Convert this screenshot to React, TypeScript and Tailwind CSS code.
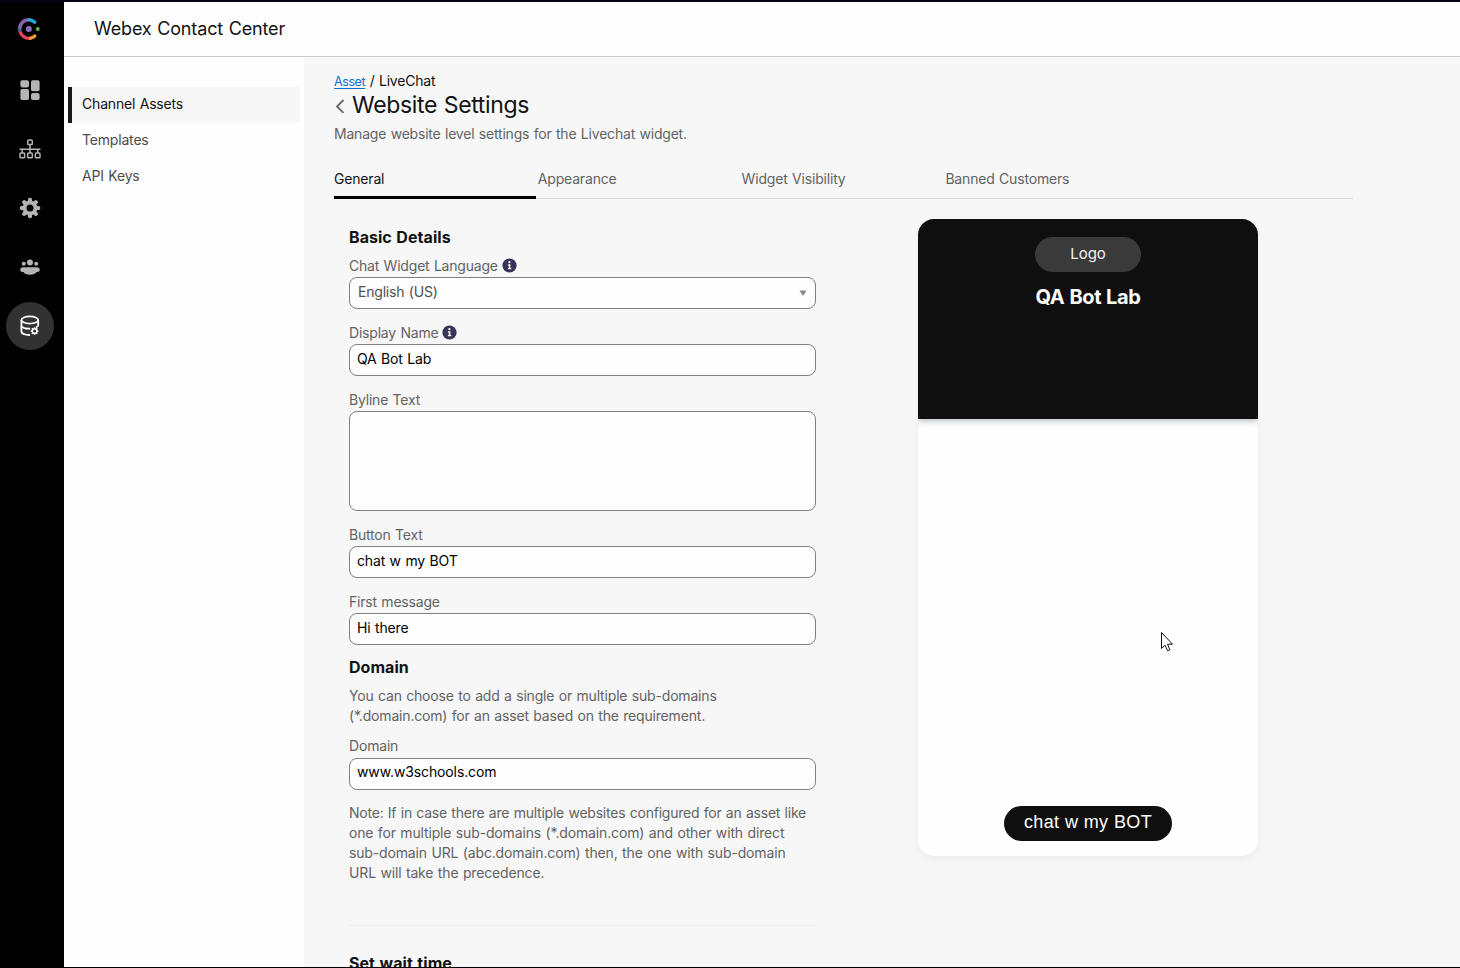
import React from "react";

const INK = "text-[#121212]";
const MUTED = "text-[#636363]";
const HEADING = "text-[16px] leading-[22px] font-bold tracking-[0.05px] text-[#121212]";

function Logo() {
  return (
    <svg width="24" height="24" viewBox="0 0 24 24" fill="none" strokeWidth="3.4">
      <path d="M2.6 12.6A9.4 9.4 0 0 1 12.5 2.7" stroke="#8a63b0" />
      <path d="M12.3 2.7A9.4 9.4 0 0 1 17.8 5.2" stroke="#28a5dc" strokeLinecap="round" />
      <path d="M2.6 11.4A9.4 9.4 0 0 0 3 14.6" stroke="#2a6f9e" />
      <path d="M3 14.4A9.4 9.4 0 0 0 13.6 21.2" stroke="#ea3f63" />
      <path d="M13.6 21.2A9.4 9.4 0 0 0 17.8 19" stroke="#f5a02c" strokeLinecap="round" />
      <circle cx="11.8" cy="12" r="3" fill="#8a6bbf" />
      <circle cx="20.8" cy="12" r="1.9" fill="#5fb846" />
    </svg>
  );
}

function DashboardIcon() {
  return (
    <svg width="20" height="20" viewBox="0 0 20 20" fill="#b4b4b4">
      <rect x="0.4" y="0.2" width="8.6" height="7.2" rx="1.8" />
      <rect x="11" y="0.2" width="8.6" height="11" rx="1.8" />
      <rect x="0.4" y="9" width="8.6" height="11" rx="1.8" />
      <rect x="11" y="13" width="8.6" height="7" rx="1.8" />
    </svg>
  );
}

function TreeIcon() {
  return (
    <svg width="22" height="20" viewBox="0 0 22 20" fill="none" stroke="#b4b4b4" strokeWidth="1.5">
      <rect x="8.7" y="1" width="4.6" height="4.6" rx="0.9" />
      <path d="M11 5.6V14M3.2 14V10.2M18.8 14V10.2M0.5 10.2H21.5" />
      <rect x="1" y="14" width="4.6" height="4.8" rx="0.9" />
      <rect x="8.7" y="14" width="4.6" height="4.8" rx="0.9" />
      <rect x="16.4" y="14" width="4.6" height="4.8" rx="0.9" />
    </svg>
  );
}

function GearIcon() {
  return (
    <svg width="22" height="22" viewBox="-11 -11 22 22">
      <g fill="#b4b4b4">
        {[0, 45, 90, 135].map((a) => (
          <rect key={a} x="-2" y="-10.2" width="4" height="20.4" rx="1.6" transform={`rotate(${a})`} />
        ))}
        <circle r="7.4" />
      </g>
      <circle r="3.5" fill="#000" />
    </svg>
  );
}

function PeopleIcon() {
  return (
    <svg width="20" height="16" viewBox="0 0 20 16" fill="#b4b4b4">
      <circle cx="10" cy="3.4" r="3" />
      <circle cx="3.8" cy="4.8" r="2" />
      <circle cx="16.2" cy="4.8" r="2" />
      <path d="M0.2 11.2C0.2 9 1.4 8.2 3 8.2H17C18.6 8.2 19.8 9 19.8 11.2C19.8 12.3 18.5 12.9 16.6 13C15.5 15 13 15.7 10 15.7S4.5 15 3.4 13C1.5 12.9 0.2 12.3 0.2 11.2Z" />
    </svg>
  );
}

function DatabaseIcon() {
  return (
    <svg width="20" height="22" viewBox="0 0 20 22" fill="none" stroke="#fff" strokeWidth="1.8">
      <ellipse cx="9.8" cy="5" rx="8.4" ry="3.6" />
      <path d="M1.4 5V16.5C1.4 18.5 5 20 10 20" />
      <path d="M18.2 5V10.8" />
      <path d="M1.4 11C2.6 13 6 13.9 10.2 13.6M18.2 10.6C17.8 11.3 17 12 16 12.4" />
      <circle cx="14.6" cy="16" r="2.3" strokeWidth="1.5" />
      <path
        strokeWidth="1.5"
        d="M14.6 12.2V13.7M14.6 18.3V19.8M10.8 16H12.3M16.9 16H18.4M11.9 13.3L13 14.4M16.2 17.6L17.3 18.7M11.9 18.7L13 17.6M16.2 14.4L17.3 13.3"
      />
    </svg>
  );
}

function InfoIcon() {
  return (
    <svg width="15" height="15" viewBox="0 0 15 15">
      <circle cx="7.5" cy="7.5" r="7.1" fill="#36345a" />
      <circle cx="7.4" cy="4.2" r="1.1" fill="#fff" />
      <path d="M5.9 6.3H8.4V10H9.3V11.2H5.9V10H6.8V7.5H5.9Z" fill="#fff" />
    </svg>
  );
}

function Label({ children, info }: { children: string; info?: boolean }) {
  return (
    <div className={`flex h-[22px] items-center gap-1 pb-px text-[14px] tracking-[-0.2px] ${MUTED}`}>
      <span>{children}</span>
      {info && <InfoIcon />}
    </div>
  );
}

function Field({ label, value, info }: { label: string; value: string; info?: boolean }) {
  return (
    <div>
      <Label info={info}>{label}</Label>
      <div className="flex h-8 items-center rounded-lg border border-[#808080] bg-[#fefefe] px-[7px] pb-[3px] text-[14px] tracking-[-0.15px] text-black">
        {value}
      </div>
    </div>
  );
}

function Rail() {
  return (
    <aside className="flex w-16 shrink-0 flex-col items-center bg-black pr-1">
      <div className="mt-[15px] mr-[2px]"><Logo /></div>
      <div className="mt-[25px] flex flex-col gap-[11px]">
        {[DashboardIcon, TreeIcon, GearIcon, PeopleIcon, DatabaseIcon].map((Icon, i) => (
          <div
            key={i}
            className={`flex size-12 items-center justify-center rounded-full ${i === 4 ? "bg-[#323232]" : ""}`}
          >
            <Icon />
          </div>
        ))}
      </div>
    </aside>
  );
}

function Preview() {
  return (
    <section className="mt-5 flex h-[637px] w-[340px] flex-col items-center overflow-hidden rounded-2xl bg-[#fefefe] shadow-[0_3px_8px_rgba(0,0,0,0.05)]">
      <div className="flex h-[200px] w-full shrink-0 flex-col items-center bg-[#0f0f0f] pt-[18px] shadow-[0_2px_6px_rgba(40,70,80,0.35)]">
        <div className="flex h-[35px] w-[106px] items-center justify-center rounded-full bg-[#3a3a3a] text-[15px] text-[#f2f2f2]">
          Logo
        </div>
        <div className="mt-[13px] text-[20px] leading-6 font-bold tracking-[-0.4px] text-white">QA Bot Lab</div>
      </div>
      <div className="mt-auto mb-[15px] flex h-[35px] w-[168px] items-center justify-center rounded-full bg-[#0f0f0f] pb-[3px] font-['Liberation_Sans',sans-serif] text-[18px] tracking-[0.4px] [word-spacing:0] text-white">
        chat w my BOT
      </div>
    </section>
  );
}

const tabs = ["General", "Appearance", "Widget Visibility", "Banned Customers"];

export default function App() {
  return (
    <div className="relative flex h-[968px] w-[1460px] flex-col overflow-hidden border-t-2 border-b border-t-[#050518] border-b-black bg-[#f7f7f8] font-['Inter',sans-serif] [word-spacing:0.7px]">
      <div className="flex min-h-0 flex-1">
        <Rail />
        <div className="flex min-w-0 flex-1 flex-col">
          <header className={`flex h-[55px] shrink-0 items-center border-b border-[#cbcbcd] bg-[#fefefe] pb-[2px] pl-[30px] text-[18px] tracking-[-0.14px] ${INK}`}>
            Webex Contact Center
          </header>
          <div className="flex min-h-0 flex-1">
            <nav className="flex w-60 shrink-0 flex-col bg-[#fefefe] pt-[30px] pr-1 pl-1 text-[14px] tracking-[-0.18px] text-[#4d4d4d]">
              <div className={`flex h-9 items-center border-l-4 border-[#1a1a1a] bg-[#f7f7f8] pb-[3px] pl-[10px] ${INK}`}>
                Channel Assets
              </div>
              <div className="flex h-9 items-center pb-[3px] pl-[14px]">Templates</div>
              <div className="flex h-9 items-center pb-[3px] pl-[14px]">API Keys</div>
            </nav>
            <main className="min-w-0 flex-1 overflow-hidden pt-[14px] pl-[30px]">
              <div className={`flex h-5 items-baseline text-[14px] leading-[19px] tracking-[-0.2px] whitespace-pre ${INK}`}>
                <a className="text-[12.5px] tracking-[-0.4px] text-[#1170cf] underline underline-offset-2">Asset</a>
                <span> / LiveChat</span>
              </div>
              <h1 className={`flex h-7 items-center gap-1.5 text-[23px] tracking-[-0.35px] ${INK}`}>
                <svg width="12" height="16" viewBox="0 0 12 16" fill="none" stroke="#666" strokeWidth="1.8">
                  <path d="M9.5 3L3 9.5L9.5 16" />
                </svg>
                Website Settings
              </h1>
              <p className={`mt-[5px] h-5 text-[14px] leading-5 tracking-[-0.2px] ${MUTED}`}>
                Manage website level settings for the Livechat widget.
              </p>
              <div className="mt-[15px] grid h-10 w-[1019px] grid-cols-5 border-b border-[#d9d9da]">
                {tabs.map((tab, i) => (
                  <div
                    key={tab}
                    className={`h-10 pt-[10px] text-[14px] leading-5 tracking-[-0.18px] ${
                      i === 0 ? "mr-[2px] border-b-[3px] border-black text-[#121212]" : "text-[#636363]"
                    }`}
                  >
                    {tab}
                  </div>
                ))}
              </div>
              <div className="flex items-start">
                <form className="ml-[15px] flex w-[467px] shrink-0 flex-col pt-[27px]">
                  <h2 className={`mb-[7px] h-[22px] ${HEADING}`}>Basic Details</h2>
                  <div className="flex flex-col gap-[13px]">
                    <div>
                      <Label info>Chat Widget Language</Label>
                      <div className="flex h-8 items-center justify-between rounded-lg border border-[#808080] bg-[#fefefe] px-2 pb-[3px] text-[14px] tracking-[-0.2px] text-[#505050]">
                        English (US)
                        <svg className="mt-0.5" width="8" height="6" viewBox="0 0 8 6" fill="#888">
                          <path d="M0.5 0.5H7.5L4 6Z" />
                        </svg>
                      </div>
                    </div>
                    <Field label="Display Name" value="QA Bot Lab" info />
                    <div>
                      <Label>Byline Text</Label>
                      <div className="h-[100px] rounded-lg border border-[#808080] bg-[#fefefe]" />
                    </div>
                    <Field label="Button Text" value="chat w my BOT" />
                    <Field label="First message" value="Hi there" />
                  </div>
                  <h2 className={`mt-[11px] h-[22px] ${HEADING}`}>Domain</h2>
                  <p className={`mt-2 mb-[10px] text-[14px] leading-5 tracking-[-0.18px] whitespace-nowrap ${MUTED}`}>
                    You can choose to add a single or multiple sub-domains
                    <br />
                    (*.domain.com) for an asset based on the requirement.
                  </p>
                  <div className={`h-[22px] text-[14px] leading-5 tracking-[-0.18px] ${MUTED}`}>Domain</div>
                  <div className="h-8 rounded-lg border border-[#808080] bg-[#fefefe] px-[7px] pt-[3px] text-[14px] leading-5 tracking-[-0.12px] text-black">
                    www.w3schools.com
                  </div>
                  <p className={`mt-[13px] text-[14px] leading-5 tracking-[-0.15px] whitespace-nowrap ${MUTED}`}>
                    <span className="tracking-[-0.23px]">
                      Note: If in case there are multiple websites configured for an asset like
                    </span>
                    <br />
                    one for multiple sub-domains (*.domain.com) and other with direct
                    <br />
                    sub-domain URL (abc.domain.com) then, the one with sub-domain
                    <br />
                    URL will take the precedence.
                  </p>
                  <hr className="mt-[42px] border-[#efeff0]" />
                  <h2 className={`mt-[26px] ${HEADING}`}>Set wait time</h2>
                </form>
                <div className="ml-[102px]">
                  <Preview />
                </div>
              </div>
            </main>
          </div>
        </div>
      </div>
      <svg className="absolute top-[630px] left-[1161px]" width="13" height="20" viewBox="0 0 13 20">
        <path
          d="M0.5 0.5V16.5L4 13.2L6.6 18.8L8.9 17.7L6.5 12.2H11.5Z"
          fill="#fff"
          stroke="#111"
          strokeWidth="1"
        />
      </svg>
    </div>
  );
}
